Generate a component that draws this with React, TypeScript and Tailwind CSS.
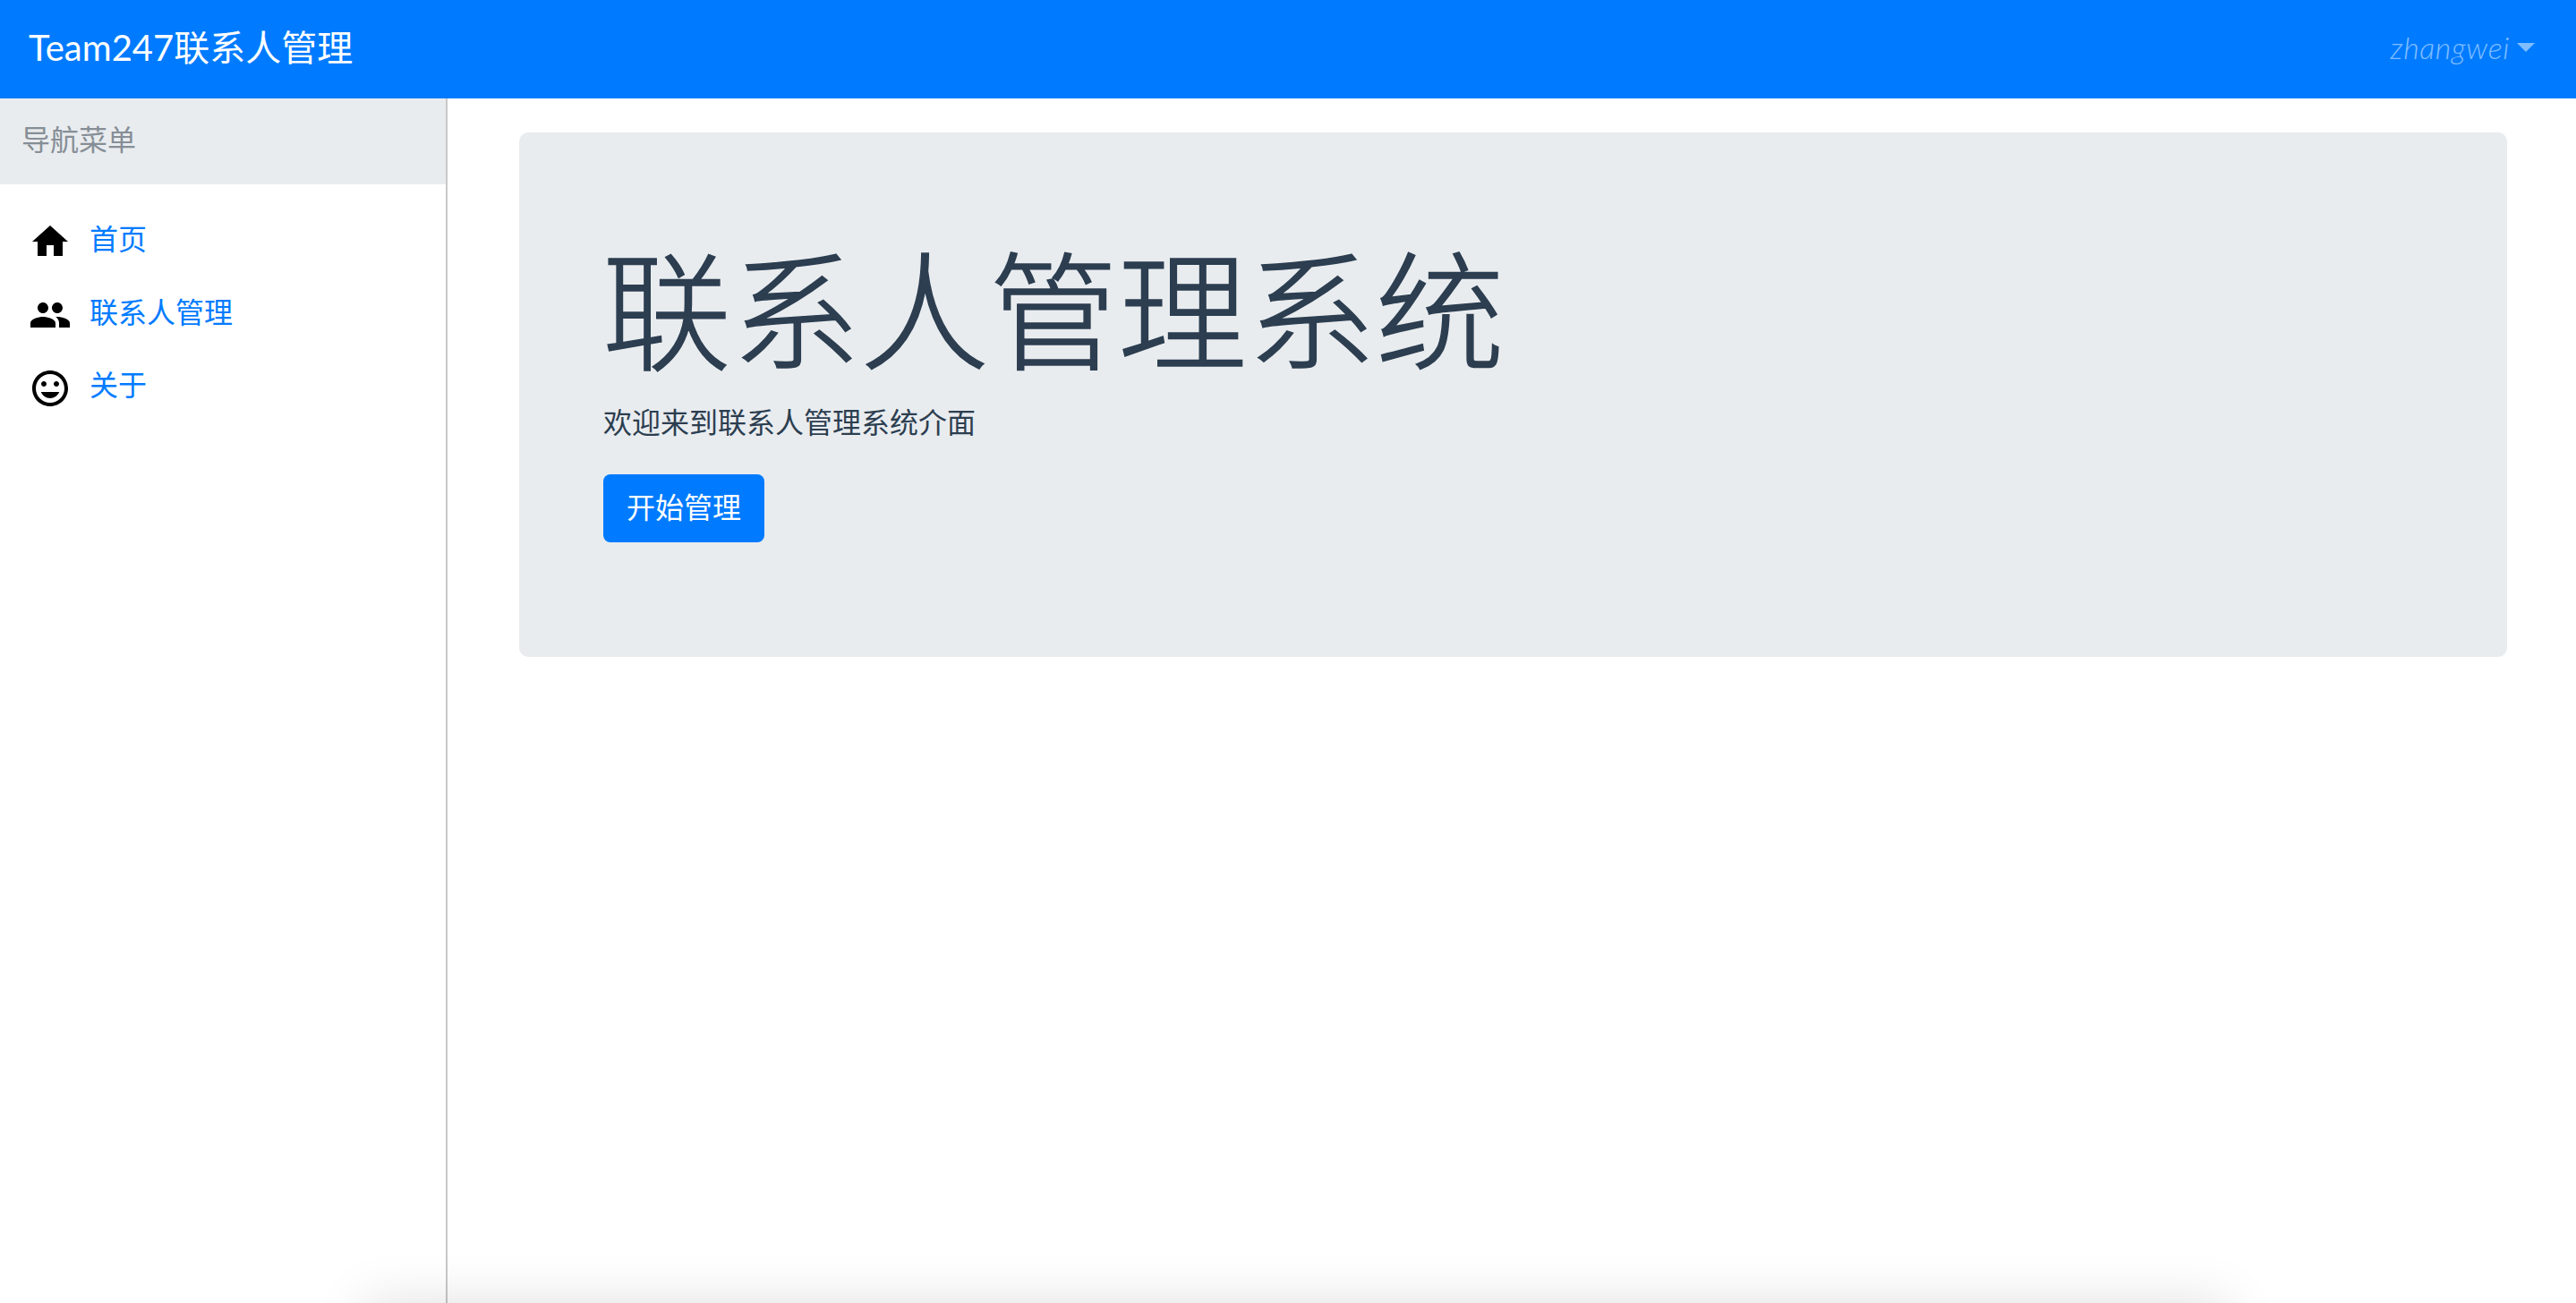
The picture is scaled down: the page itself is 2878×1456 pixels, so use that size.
import React from "react";
import { MdHome, MdPeople, MdTagFaces } from "react-icons/md";

const cjk = "font-['Lato','Noto_Sans_CJK_SC',sans-serif]";

const App: React.FC = () => {
  return (
    <div className={`relative flex h-[1456px] flex-col overflow-hidden bg-white text-[32px] leading-[48px] text-[#2c3e50] ${cjk}`}>
      <nav className="flex h-[110px] shrink-0 items-center justify-between bg-[#007bff] pb-1 pl-8 pr-[46px]">
        <span className="text-[40px] leading-[60px] text-white">Team247联系人管理</span>
        <a className="flex items-center text-[34px] font-light italic tracking-[0.6px] text-white/50">
          zhangwei
          <span className="ml-2 h-0 w-0 border-x-[10px] border-t-[10px] border-x-transparent border-t-white/50" />
        </a>
      </nav>
      <div className="flex min-h-0 flex-1">
        <aside className="w-[500px] shrink-0 border-r-2 border-[#c8c8c8]">
          <div className="flex h-[96px] items-center bg-[#e9ecef] pb-1 pl-6 text-[#868e96]">导航菜单</div>
          <ul className="pt-[20px]">
            <li className="flex h-[82px] items-center pl-8">
              <MdHome className="mt-[6px] size-12 text-black" />
              <a className="ml-5 text-[#007bff]">首页</a>
            </li>
            <li className="flex h-[82px] items-center pl-8">
              <MdPeople className="mt-[6px] size-12 text-black" />
              <a className="ml-5 text-[#007bff]">联系人管理</a>
            </li>
            <li className="flex h-[82px] items-center pl-8">
              <MdTagFaces className="mt-[6px] size-12 text-black" />
              <a className="ml-5 -translate-y-px text-[#007bff]">关于</a>
            </li>
          </ul>
        </aside>
        <main className="flex-1 pl-[80px] pr-[77px] pt-[38px]">
          <div className="h-[586px] rounded-[10px] bg-[#e9ecef] pl-[94px] pt-[113px]">
            <h1 className="-ml-px text-[144px] font-light leading-[173px] [-webkit-text-stroke:1.5px_#2c3e50]">联系人管理系统</h1>
            <p className="mt-[14px] leading-[48px]">欢迎来到联系人管理系统介面</p>
            <button className="mt-[34px] h-[76px] w-[180px] rounded-lg bg-[#007bff] pb-[2px] text-white">开始管理</button>
          </div>
        </main>
      </div>
      {/* shadow of something sitting just below the visible window */}
      <div className="pointer-events-none absolute inset-x-0 bottom-0 h-[120px] overflow-hidden">
        <div className="absolute left-[408px] top-[120px] h-[100px] w-[2080px] shadow-[0_0_60px_rgba(0,0,0,0.13)]" />
      </div>
    </div>
  );
};

export default App;
